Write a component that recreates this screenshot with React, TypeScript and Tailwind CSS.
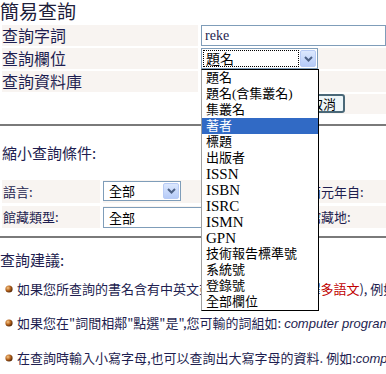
import React from "react";

const CJK = '"Noto Sans CJK TC", "Noto Sans CJK SC", sans-serif';
const SERIF_CJK = '"Liberation Serif", "Noto Sans CJK TC", serif';

function Arrow({ className = "" }: { className?: string }) {
  return (
    <div
      className={
        "flex items-center justify-center border border-[#b8cbf5] bg-gradient-to-b from-[#dce8fe] to-[#b6cbf8] rounded-[2px] " +
        className
      }
    >
      <svg width="9" height="6" viewBox="0 0 9 6">
        <path d="M1 1 L4.5 4.5 L8 1" stroke="#4d6185" strokeWidth="2" fill="none" />
      </svg>
    </div>
  );
}

function Bullet() {
  return (
    <svg width="8" height="8" viewBox="0 0 8 8" className="shrink-0">
      <defs>
        <radialGradient id="bg" cx="35%" cy="35%" r="65%">
          <stop offset="0%" stopColor="#f6c98a" />
          <stop offset="55%" stopColor="#b8651e" />
          <stop offset="100%" stopColor="#5a2a08" />
        </radialGradient>
      </defs>
      <circle cx="4" cy="4" r="3.6" fill="url(#bg)" />
    </svg>
  );
}

const items: { t: string; latin?: boolean }[] = [
  { t: "題名" },
  { t: "題名(含集叢名)" },
  { t: "集叢名" },
  { t: "著者" },
  { t: "標題" },
  { t: "出版者" },
  { t: "ISSN", latin: true },
  { t: "ISBN", latin: true },
  { t: "ISRC", latin: true },
  { t: "ISMN", latin: true },
  { t: "GPN", latin: true },
  { t: "技術報告標準號" },
  { t: "系統號" },
  { t: "登錄號" },
  { t: "全部欄位" },
];

export default function App() {
  return (
    <div
      className="relative w-[386px] h-[374px] overflow-hidden bg-white text-[#1e1e50]"
      style={{ fontFamily: CJK }}
    >
      {/* Section 1 */}
      <div className="h-[25px] text-[19px] leading-[22px] text-[#20203a] whitespace-nowrap">簡易查詢</div>
      <div className="flex flex-col gap-[2px]">
        <div className="flex h-[21px] gap-[3px]">
          <div className="ml-[2px] w-[196px] bg-[#f8f4f1] text-[16px] leading-[21px] whitespace-nowrap">查詢字詞</div>
          <div className="flex-1 border border-[#7f9db9] bg-white pl-[3px] text-[14px] leading-[19px]" style={{ fontFamily: SERIF_CJK }}>
            reke
          </div>
        </div>
        <div className="flex h-[21px] gap-[3px]">
          <div className="ml-[2px] w-[196px] bg-[#f8f4f1] text-[16px] leading-[21px] whitespace-nowrap">查詢欄位</div>
          <div className="flex-1 bg-[#f8f4f1]">
            <div className="flex w-[117px] h-[21px] border border-[#7f9db9] bg-white p-[1px]">
              <div className="flex-1 border border-dotted border-black text-[14px] leading-[15px] pl-[2px] text-black">題名</div>
              <Arrow className="w-[16px] ml-[1px]" />
            </div>
          </div>
        </div>
        <div className="flex h-[21px] gap-[3px]">
          <div className="ml-[2px] w-[196px] bg-[#f8f4f1] text-[16px] leading-[21px] whitespace-nowrap">查詢資料庫</div>
          <div className="flex-1 bg-[#f8f4f1]"></div>
        </div>
        <div className="flex h-[20px] gap-[3px]">
          <div className="ml-[2px] w-[196px]"></div>
          <div className="flex-1 bg-[#f8f4f1] flex gap-[4px] pl-[52px]">
            <div className="w-[44px] h-[19px] border-2 border-[#4a6878] rounded-[3px] bg-[#eef6f9] text-[13px] leading-[15px] text-center text-black">查詢</div>
            <div className="w-[44px] h-[19px] border-2 border-[#4a6878] rounded-[3px] bg-[#eef6f9] text-[13px] leading-[15px] text-center text-black">取消</div>
          </div>
        </div>
      </div>
      <div className="mt-[10px] h-[2px] bg-[#7a7a7a]"></div>

      {/* Section 2 */}
      <div className="mt-[18px] ml-[2px] h-[18px] text-[15px] leading-[18px] whitespace-nowrap">縮小查詢條件:</div>
      <div className="mt-[18px] flex flex-col gap-[3px]">
        <div className="flex h-[23px] gap-[3px]">
          <div className="ml-[2px] w-[98px] bg-[#f8f4f1] text-[13px] leading-[23px] pl-[1px] whitespace-nowrap">語言:</div>
          <div className="w-[200px] bg-[#f8f4f1] pt-[1px]">
            <div className="flex w-[78px] h-[20px] border border-[#7f9db9] bg-white p-[1px]">
              <div className="flex-1 text-[13px] leading-[16px] pl-[4px] text-black">全部</div>
              <Arrow className="w-[16px]" />
            </div>
          </div>
          <div className="flex-1 bg-[#f8f4f1] text-[13px] leading-[23px] pl-[2px] whitespace-nowrap">西元年自:</div>
        </div>
        <div className="flex h-[22px] gap-[3px]">
          <div className="ml-[2px] w-[98px] bg-[#f8f4f1] text-[13px] leading-[22px] pl-[1px] whitespace-nowrap">館藏類型:</div>
          <div className="w-[200px] bg-[#f8f4f1] pt-[1px]">
            <div className="flex w-[150px] h-[21px] border border-[#7f9db9] bg-white p-[1px]">
              <div className="flex-1 text-[13px] leading-[17px] pl-[4px] text-black">全部</div>
            </div>
          </div>
          <div className="flex-1 bg-[#f8f4f1] text-[13px] leading-[22px] pl-[2px] whitespace-nowrap">館藏地:</div>
        </div>
      </div>
      <div className="mt-[8px] h-[2px] bg-[#7a7a7a]"></div>

      {/* Section 3 */}
      <div className="mt-[14px] h-[16px] text-[15px] leading-[16px] whitespace-nowrap">查詢建議:</div>
      <div className="mt-[12px] flex flex-col gap-[17px] text-[13px] leading-[17px]">
        <div className="flex items-center gap-[4px] pl-[5px] whitespace-nowrap">
          <Bullet />
          <span>
            如果您所查詢的書名含有中英文或其他語文等(請選擇
            <span className="text-[#c00000]">多語文</span>), 例如
          </span>
        </div>
        <div className="flex items-center gap-[4px] pl-[5px] whitespace-nowrap">
          <Bullet />
          <span>
            如果您在"詞間相鄰"點選"是",您可輸的詞組如:{" "}
            <i style={{ fontFamily: '"Liberation Sans", sans-serif' }}>computer program</i>
          </span>
        </div>
        <div className="flex items-center gap-[4px] pl-[5px] whitespace-nowrap">
          <Bullet />
          <span>
            在查詢時輸入小寫字母,也可以查詢出大寫字母的資料. 例如:
            <i style={{ fontFamily: '"Liberation Sans", sans-serif' }}>computer</i>
          </span>
        </div>
      </div>

      {/* Open dropdown list */}
      <div
        className="absolute left-[201px] top-[69px] w-[118px] border border-black border-l-[#a0a0a0] bg-white text-black"
        style={{ fontFamily: SERIF_CJK }}
      >
        {items.map(({ t, latin }) => (
          <div
            key={t}
            className={
              "h-[16px] leading-[16px] pl-[4px] whitespace-nowrap " +
              (latin ? "text-[15px] " : "text-[13px] ") +
              (t === "著者" ? "bg-[#316ac5] text-white" : "")
            }
          >
            {t}
          </div>
        ))}
      </div>
    </div>
  );
}
